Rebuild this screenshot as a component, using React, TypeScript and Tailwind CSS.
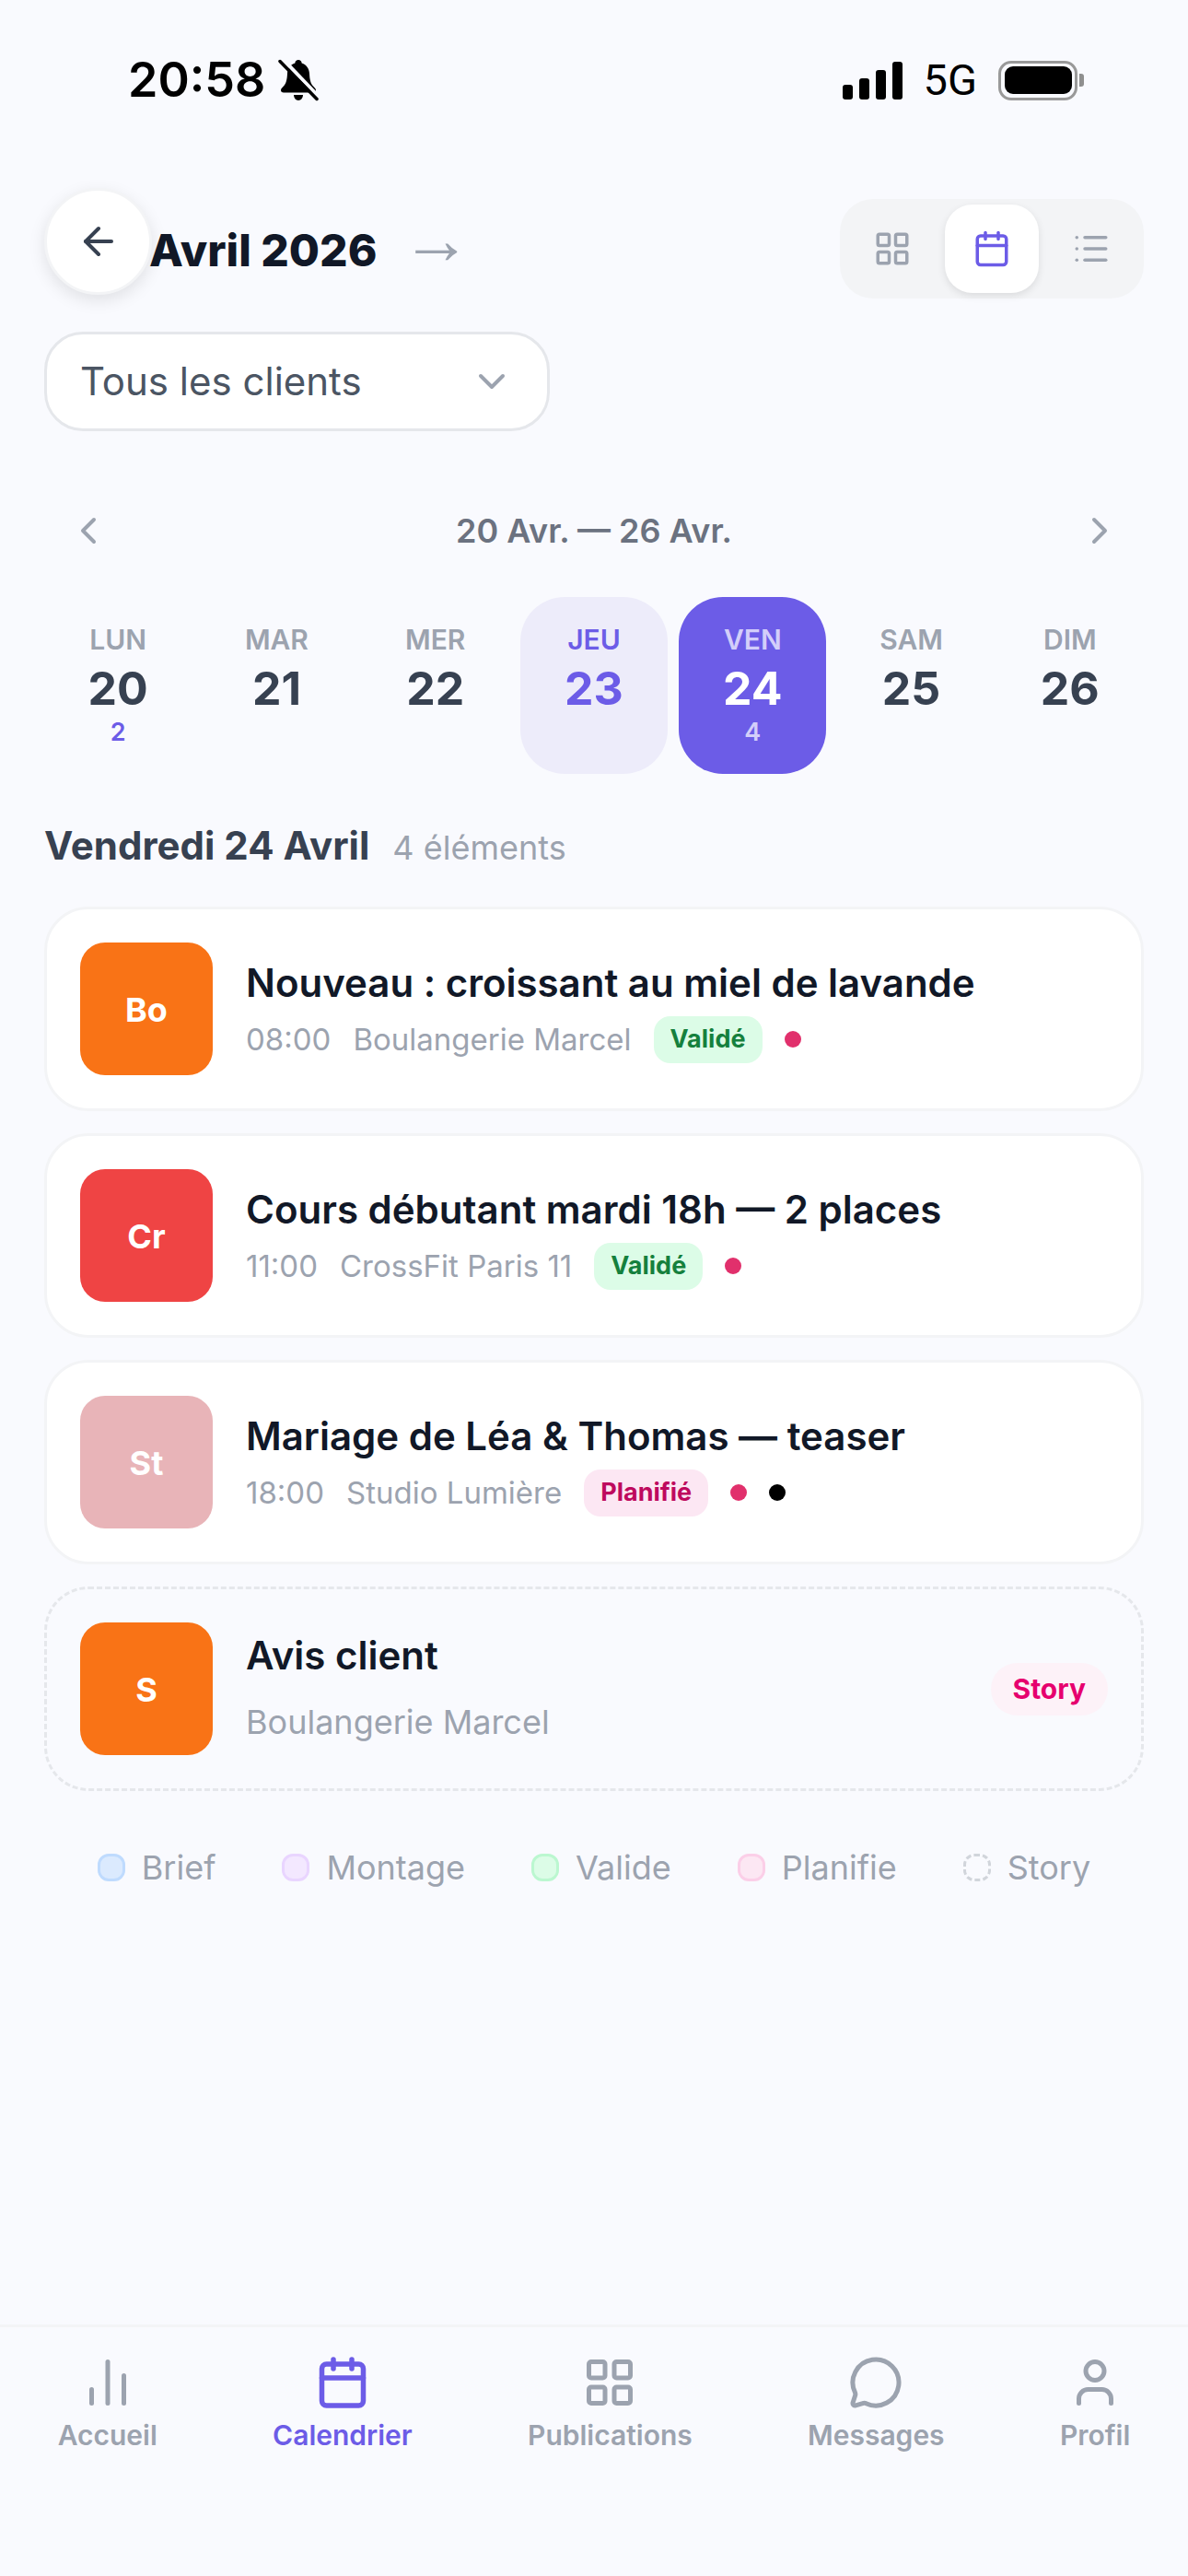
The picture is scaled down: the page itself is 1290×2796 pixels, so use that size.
import React from "react";
import {
  ArrowLeft,
  Calendar,
  ChartNoAxesColumn,
  ChevronDown,
  ChevronLeft,
  ChevronRight,
  LayoutGrid,
  List,
  MessageCircle,
  User,
} from "lucide-react";

function BellSlash() {
  return (
    <svg width="44" height="46" viewBox="0 0 44 46" className="ml-[14px]">
      <path
        d="M22 1c-2 0-3.6 1.5-3.6 3.4C13 6 10.2 10.6 10 16c-.3 7-1.600 10.500-3.600 13-1.500 1.700-3.400 3-3.400 5 0 1.500 1 2.500 3 2.500h32c2 0 3-1 3-2.500 0-2-1.900-3.300-3.400-5-2-2.500-3.300-6-3.600-13-.2-5.400-3-10-8.400-11.600C25.600 2.500 24 1 22 1z"
        fill="#000"
      />
      <path d="M17 39h10c0 3-2.200 6-5 6s-5-3-5-6z" fill="#000" />
      <path d="M5 0 L47 44" stroke="#f9fafe" strokeWidth="4" />
      <path d="M2 2.500 L42 43.500" stroke="#000" strokeWidth="3.500" strokeLinecap="round" />
    </svg>
  );
}

function Signal() {
  return (
    <div className="flex items-end gap-[7px] h-[41px]">
      <div className="w-[11px] h-[16px] bg-black rounded-[3px]" />
      <div className="w-[11px] h-[23px] bg-black rounded-[3px]" />
      <div className="w-[11px] h-[32px] bg-black rounded-[3px]" />
      <div className="w-[11px] h-[41px] bg-black rounded-[3px]" />
    </div>
  );
}

function Battery() {
  return (
    <div className="flex items-center">
      <div className="w-[86px] h-[43px] rounded-[14px] border-[3.5px] border-[#999999] p-[3.5px]">
        <div className="w-full h-full bg-black rounded-[9px]" />
      </div>
      <div className="w-[5px] h-[14px] bg-[#8f8f8f] rounded-r-[3px] ml-[2px]" />
    </div>
  );
}

function StatusBar() {
  return (
    <div className="h-[109px] pt-[65px] pl-[139px] pr-[113px] flex items-center justify-between shrink-0">
      <div className="flex items-center">
        <span className="text-[52px] leading-[44px] font-semibold text-black">20:58</span>
        <BellSlash />
      </div>
      <div className="flex items-center">
        <Signal />
        <span className="ml-[23px] mr-[23px] font-['Roboto',sans-serif] text-[47px] leading-[44px] font-normal text-black">5G</span>
        <Battery />
      </div>
    </div>
  );
}

function Header() {
  return (
    <div className="mt-[107px] px-[48px] flex items-center justify-between h-[108px] shrink-0">
      <div className="flex items-center pl-[114px]">
        <span className="text-[48px] leading-[60px] font-extrabold text-[#111827] mt-[3px]">Avril 2026</span>
        <span className="ml-[26px] font-['Liberation_Sans',sans-serif] text-[76px] leading-[60px] text-[#9ca3af] -mt-[20px]">→</span>
      </div>
      <div className="flex gap-[6px] p-[6px] bg-[#f3f4f6] rounded-[36px]">
        <div className="w-[102px] h-[96px] rounded-[30px] flex items-center justify-center">
          <LayoutGrid size={42} strokeWidth={2} color="#9ca3af" />
        </div>
        <div className="w-[102px] h-[96px] rounded-[30px] flex items-center justify-center bg-white shadow-[0_3px_9px_rgba(0,0,0,0.1)]">
          <Calendar size={42} strokeWidth={2} color="#6c5ce7" />
        </div>
        <div className="w-[102px] h-[96px] rounded-[30px] flex items-center justify-center">
          <List size={42} strokeWidth={2} color="#9ca3af" />
        </div>
      </div>
    </div>
  );
}

function ClientSelect() {
  return (
    <div className="mt-[36px] ml-[48px] w-[549px] h-[108px] shrink-0 bg-white border-[3px] border-[#e5e7eb] rounded-[42px] pl-[36px] pr-[36px] flex items-center justify-between">
      <span className="text-[42px] leading-[50px] text-[#4b5563]">Tous les clients</span>
      <ChevronDown size={48} strokeWidth={2} color="#9ca3af" />
    </div>
  );
}

function WeekNav() {
  return (
    <div className="mt-[60px] mx-[48px] h-[96px] shrink-0 flex items-center justify-between">
      <div className="w-[96px] h-[96px] flex items-center justify-center">
        <ChevronLeft size={48} strokeWidth={2} color="#9ca3af" />
      </div>
      <span className="text-[36px] leading-[48px] font-semibold text-[#6b7280]">20 Avr. — 26 Avr.</span>
      <div className="w-[96px] h-[96px] flex items-center justify-center">
        <ChevronRight size={48} strokeWidth={2} color="#9ca3af" />
      </div>
    </div>
  );
}

type Day = { l: string; n: string; c?: string; kind?: "today" | "sel" };

const days: Day[] = [
  { l: "LUN", n: "20", c: "2" },
  { l: "MAR", n: "21" },
  { l: "MER", n: "22" },
  { l: "JEU", n: "23", kind: "today" },
  { l: "VEN", n: "24", c: "4", kind: "sel" },
  { l: "SAM", n: "25" },
  { l: "DIM", n: "26" },
];

function DayCell({ d }: { d: Day }) {
  const box = d.kind === "sel" ? "bg-[#6c5ce7]" : d.kind === "today" ? "bg-[#edecfa]" : "";
  const label = d.kind === "sel" ? "text-[#d3cefa]" : d.kind === "today" ? "text-[#6c5ce7]" : "text-[#9ca3af]";
  const num = d.kind === "sel" ? "text-white" : d.kind === "today" ? "text-[#6c5ce7]" : "text-[#374151]";
  const count = d.kind === "sel" ? "text-[#d3cefa]" : "text-[#6c5ce7]";
  return (
    <div className={`h-[192px] rounded-[48px] flex flex-col items-center pt-[28px] ${box}`}>
      <span className={`text-[30px] leading-[36px] font-semibold ${label}`}>{d.l}</span>
      <span className={`mt-[10px] text-[50px] leading-[51px] font-bold ${num}`}>{d.n}</span>
      {d.c && <span className={`mt-[6px] text-[27px] leading-[32px] font-semibold ${count}`}>{d.c}</span>}
    </div>
  );
}

type Post = {
  i: string;
  color: string;
  title: string;
  time: string;
  client: string;
  badge: string;
  badgeClass: string;
  dots: string[];
};

const posts: Post[] = [
  {
    i: "Bo",
    color: "bg-[#f97316]",
    title: "Nouveau : croissant au miel de lavande",
    time: "08:00",
    client: "Boulangerie Marcel",
    badge: "Validé",
    badgeClass: "bg-[#dcfce7] text-[#15803d]",
    dots: ["bg-[#e1306c]"],
  },
  {
    i: "Cr",
    color: "bg-[#ef4444]",
    title: "Cours débutant mardi 18h — 2 places",
    time: "11:00",
    client: "CrossFit Paris 11",
    badge: "Validé",
    badgeClass: "bg-[#dcfce7] text-[#15803d]",
    dots: ["bg-[#e1306c]"],
  },
  {
    i: "St",
    color: "bg-[#e8b4b8]",
    title: "Mariage de Léa & Thomas — teaser",
    time: "18:00",
    client: "Studio Lumière",
    badge: "Planifié",
    badgeClass: "bg-[#fce7f3] text-[#be0a5e]",
    dots: ["bg-[#e1306c]", "bg-black"],
  },
];

function Thumb({ i, color }: { i: string; color: string }) {
  return (
    <div className={`w-[144px] h-[144px] shrink-0 rounded-[27px] pt-[2px] flex items-center justify-center text-[36px] font-bold text-white ${color}`}>
      {i}
    </div>
  );
}

function PostCard({ p }: { p: Post }) {
  return (
    <div className="h-[222px] bg-white border-[3px] border-[#f3f4f6] rounded-[48px] px-[36px] flex items-center gap-[36px]">
      <Thumb i={p.i} color={p.color} />
      <div className="flex flex-col">
        <span className="text-[42px] leading-[60px] font-semibold text-[#111827]">{p.title}</span>
        <div className="mt-[6px] flex items-center gap-[24px] text-[33px] leading-[44px] text-[#9ca3af]">
          <span>{p.time}</span>
          <span>{p.client}</span>
          <span className={`h-[51px] px-[18px] rounded-[18px] flex items-center text-[27px] font-bold ${p.badgeClass}`}>{p.badge}</span>
          {p.dots.map((d, k) => (
            <span key={k} className={`w-[18px] h-[18px] rounded-full ${d}`} />
          ))}
        </div>
      </div>
    </div>
  );
}

function StoryCard() {
  return (
    <div className="h-[222px] border-[3px] border-dashed border-[#e5e7eb] rounded-[48px] px-[36px] flex items-center gap-[36px]">
      <Thumb i="S" color="bg-[#f97316]" />
      <div className="flex flex-col flex-1">
        <span className="text-[42px] leading-[50px] font-semibold text-[#111827]">Avis client</span>
        <span className="mt-[22px] text-[36px] leading-[50px] text-[#9ca3af]">Boulangerie Marcel</span>
      </div>
      <span className="h-[57px] px-[24px] rounded-full bg-[#fdf2f8] text-[#e6006e] text-[30px] font-bold flex items-center">Story</span>
    </div>
  );
}

const legend = [
  { t: "Brief", c: "bg-[#dbeafe] border-[#bfdbfe] border-solid" },
  { t: "Montage", c: "bg-[#f3e8ff] border-[#e9d5ff] border-solid" },
  { t: "Valide", c: "bg-[#dcfce7] border-[#bbf7d0] border-solid" },
  { t: "Planifie", c: "bg-[#fce7f3] border-[#fbcfe8] border-solid" },
  { t: "Story", c: "border-[#d1d5db] border-dashed" },
];

function Legend() {
  return (
    <div className="mt-[61px] h-[44px] shrink-0 flex items-center justify-center gap-[72px]">
      {legend.map((l) => (
        <div key={l.t} className="flex items-center gap-[18px]">
          <span className={`w-[30px] h-[30px] rounded-[12px] border-[3px] ${l.c}`} />
          <span className="text-[36px] leading-[44px] text-[#9ca3af]">{l.t}</span>
        </div>
      ))}
    </div>
  );
}

function NavItem({ icon, label, active }: { icon: React.ReactNode; label: string; active?: boolean }) {
  return (
    <div className="flex flex-col items-center">
      <div className="w-[60px] h-[60px]">{icon}</div>
      <span className={`mt-[7px] text-[30px] leading-[40px] font-semibold ${active ? "text-[#6c5ce7]" : "text-[#9ca3af]"}`}>{label}</span>
    </div>
  );
}

function BottomNav() {
  return (
    <div className="mt-auto h-[273px] shrink-0 border-t-[3px] border-[#f3f4f6] pt-[30px] flex justify-around">
      <NavItem label="Accueil" icon={<ChartNoAxesColumn size={60} strokeWidth={2} color="#9ca3af" />} />
      <NavItem label="Calendrier" active icon={<Calendar size={60} strokeWidth={2.2} color="#6c5ce7" />} />
      <NavItem label="Publications" icon={<LayoutGrid size={60} strokeWidth={2} color="#9ca3af" />} />
      <NavItem label="Messages" icon={<MessageCircle size={60} strokeWidth={2} color="#9ca3af" />} />
      <NavItem label="Profil" icon={<User size={60} strokeWidth={2} color="#9ca3af" />} />
    </div>
  );
}

export default function App() {
  return (
    <div className="relative w-[1290px] h-[2796px] bg-[#f9fafe] flex flex-col font-['Inter',sans-serif] overflow-hidden">
      <StatusBar />
      <Header />
      <div className="absolute left-[48px] top-[204px] w-[117px] h-[116px] rounded-full bg-white border-[3px] border-[#f3f4f6] shadow-[0_6px_18px_rgba(0,0,0,0.1)] flex items-center justify-center">
        <ArrowLeft size={48} strokeWidth={2} color="#374151" />
      </div>
      <ClientSelect />
      <WeekNav />
      <div className="mt-[24px] mx-[48px] grid grid-cols-7 gap-[12px] shrink-0">
        {days.map((d) => (
          <DayCell key={d.l} d={d} />
        ))}
      </div>
      <div className="mt-[53px] mx-[48px] h-[50px] shrink-0 flex items-baseline gap-[25px]">
        <span className="text-[42px] leading-[50px] font-bold text-[#374151]">Vendredi 24 Avril</span>
        <span className="text-[36px] leading-[50px] text-[#9ca3af]">4 éléments</span>
      </div>
      <div className="mt-[41px] mx-[48px] flex flex-col gap-[24px] shrink-0">
        {posts.map((p) => (
          <PostCard key={p.i} p={p} />
        ))}
        <StoryCard />
      </div>
      <Legend />
      <BottomNav />
    </div>
  );
}
